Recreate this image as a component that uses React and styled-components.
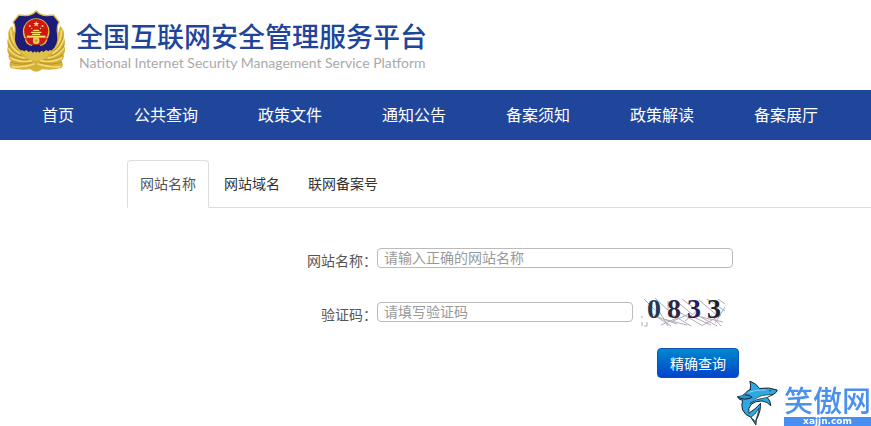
import React, { useState } from 'react';
import styled, { createGlobalStyle } from 'styled-components';

const NAV_ITEMS = ['首页', '公共查询', '政策文件', '通知公告', '备案须知', '政策解读', '备案展厅'];

const TABS = ['网站名称', '网站域名', '联网备案号'];

const CAPTCHA = [
  { digit: '0', color: '#1f3a52' },
  { digit: '8', color: '#33263f' },
  { digit: '3', color: '#251c5c' },
  { digit: '3', color: '#1c222c' },
];

function Emblem() {
  return (
    <svg width="59" height="64" viewBox="20 30 176 192" aria-hidden="true">
      {/* wheat wreath */}
      <path
        d="M38 78 Q22 92 28 112 Q20 124 26 138 Q20 152 28 164 Q24 174 34 182 Q26 194 34 204 Q62 212 92 208 Q110 222 128 208 Q158 212 186 204 Q194 194 186 182 Q196 174 192 164 Q200 152 194 138 Q200 124 192 112 Q198 92 182 78 L160 150 L110 176 L60 150 Z"
        fill="#d6b03a"
      />
      <g fill="none" stroke="#f3dd70" strokeWidth="5" strokeLinecap="round">
        <path d="M34 90 Q34 122 54 144" />
        <path d="M28 118 Q36 146 60 160" />
        <path d="M28 146 Q42 168 74 174" />
        <path d="M34 174 Q60 188 96 182" />
        <path d="M38 200 Q70 204 104 192" />
        <path d="M186 90 Q186 122 166 144" />
        <path d="M192 118 Q184 146 160 160" />
        <path d="M192 146 Q178 168 146 174" />
        <path d="M186 174 Q160 188 124 182" />
        <path d="M182 200 Q150 204 116 192" />
      </g>
      <g fill="none" stroke="#a8822a" strokeWidth="2" strokeLinecap="round">
        <path d="M29 108 Q34 134 56 152" />
        <path d="M26 134 Q38 160 66 168" />
        <path d="M30 164 Q52 182 86 180" />
        <path d="M34 186 Q66 198 98 188" />
        <path d="M191 108 Q186 134 164 152" />
        <path d="M194 134 Q182 160 154 168" />
        <path d="M190 164 Q168 182 134 180" />
        <path d="M186 186 Q154 198 122 188" />
      </g>
      {/* shield */}
      <path
        d="M110 33 Q122 46 142 47 L162 45 L179 66 Q170 80 175 104 Q180 138 154 156 Q128 166 110 176 Q92 166 66 156 Q40 138 45 104 Q50 80 41 66 L58 45 L78 47 Q98 46 110 33 Z"
        fill="#1d1c78"
        stroke="#dcb944"
        strokeWidth="4"
      />
      <path
        d="M62 154 L68 150 L74 154 L80 150 L88 156 L94 152 L100 158 L106 154 L110 158 L114 154 L120 158 L126 152 L132 156 L140 150 L146 154 L152 150 L158 154 L138 174 L110 184 L82 174 Z"
        fill="#dfc04a"
      />
      {/* national emblem */}
      <circle cx="110" cy="95" r="40" fill="#e3bd3e" />
      <circle cx="110" cy="93" r="36" fill="#d01614" />
      <path d="M110 63 L112 69 L119 69 L114 73 L116 80 L110 76 L104 80 L106 73 L101 69 L108 69 Z" fill="#ffe46b" />
      <g fill="#ffe46b">
        <circle cx="91" cy="78" r="3" />
        <circle cx="97" cy="85" r="2" />
        <circle cx="123" cy="85" r="2" />
        <circle cx="129" cy="78" r="3" />
        <path d="M100 93 L103 89 H117 L120 93 Z" />
        <path d="M96 95 H124 L127 99 H93 Z" />
        <path d="M98 101 H122 V105 H98 Z" />
        <path d="M82 107 H138 V113 H82 Z" />
      </g>
      <path d="M76 114 Q90 120 110 119 Q130 120 144 114 L138 132 L124 132 Q110 140 96 132 L82 132 Z" fill="#cd1815" />
      <circle cx="110" cy="122" r="10" fill="#edcf5a" />
      <circle cx="110" cy="122" r="4" fill="#c79e2b" />
      <path d="M78 118 Q82 134 98 136 M142 118 Q138 134 122 136" fill="none" stroke="#e3bd3e" strokeWidth="4" />
    </svg>
  );
}

function Shark() {
  return (
    <svg width="41" height="46" viewBox="288 134 124 138" aria-hidden="true">
      <g stroke="#14202a" strokeWidth="3" strokeLinejoin="round" strokeLinecap="round">
        <path
          d="M328 162 Q331 148 327 137 Q346 143 356 159 Q386 154 410 164 Q407 173 396 178 L379 186 Q390 196 390 211 Q380 199 364 197 Q344 196 332 206 Q320 218 324 234 Q344 222 359 204 Q360 226 352 242 Q344 254 345 269 Q337 258 330 246 Q312 240 305 224 Q300 210 305 195 Q293 194 290 184 Q304 184 313 174 Q318 166 328 162 Z"
          fill="#2fa8e2"
        />
        <path d="M328 204 Q344 190 366 189 L379 186 L397 177 Q376 178 362 181 Q340 188 328 204 Z" fill="#fff" strokeWidth="2" />
        <path d="M290 184 Q308 198 334 186 Q328 178 313 178" fill="#2795d2" strokeWidth="3" />
        <path d="M331 246 Q342 240 354 219 Q352 236 344 258 Z" fill="#fff" strokeWidth="2" />
      </g>
      <path d="M324 171 Q342 163 374 164" fill="none" stroke="#7fd2f4" strokeWidth="3" strokeLinecap="round" />
      <circle cx="388" cy="166" r="2" fill="#14202a" />
    </svg>
  );
}

function CaptchaNoise() {
  return (
    <Noise viewBox="0 0 86 30" aria-hidden="true">
      <g fill="none" stroke="#b3aab6" strokeWidth="1">
        <path d="M3 2 L14 13 M1 19 V21 M1 25 V29 M6 25 V29 L3 29 M14 1 L30 16 M27 4 V13" />
        <path d="M10 16 L30 29 M14 19 L36 27 M18 14 L27 29 M22 22 L46 28" />
        <path d="M34 3 L52 18 M41 2 L58 15 M30 17 L50 29 M38 15 L62 29" />
        <path d="M44 24 L58 12 M48 18 L70 28 M58 3 L78 20 M66 2 L84 14" />
        <path d="M54 17 L76 29 M60 20 L82 25 M70 18 L80 29 M84 10 L74 26 M77 2 L84 7" />
        <path d="M20 28 L38 20 M32 24 L48 17 M62 28 L80 18" />
      </g>
    </Noise>
  );
}

function App() {
  const [activeTab, setActiveTab] = useState(0);
  const [name, setName] = useState('');
  const [code, setCode] = useState('');

  return (
    <>
      <GlobalStyle />
      <Header>
        <Emblem />
        <Brand>
          <Title>全国互联网安全管理服务平台</Title>
          <Subtitle>National Internet Security Management Service Platform</Subtitle>
        </Brand>
      </Header>

      <Nav>
        {NAV_ITEMS.map((item) => (
          <NavLink key={item} href="#">
            {item}
          </NavLink>
        ))}
      </Nav>

      <Main>
        <TabList role="tablist">
          {TABS.map((tab, i) => (
            <Tab key={tab} role="tab" aria-selected={i === activeTab} $active={i === activeTab} onClick={() => setActiveTab(i)}>
              {tab}
            </Tab>
          ))}
        </TabList>

        <Form onSubmit={(e) => e.preventDefault()}>
          <Row>
            <Label htmlFor="site-name">网站名称：</Label>
            <Field>
              <Input id="site-name" placeholder="请输入正确的网站名称" value={name} onChange={(e) => setName(e.target.value)} />
            </Field>
          </Row>
          <Row>
            <Label htmlFor="site-code">验证码：</Label>
            <Field>
              <Input id="site-code" placeholder="请填写验证码" value={code} onChange={(e) => setCode(e.target.value)} />
              <Captcha>
                <CaptchaNoise />
                {CAPTCHA.map((c, i) => (
                  <Digit key={i} $color={c.color}>
                    {c.digit}
                  </Digit>
                ))}
              </Captcha>
            </Field>
          </Row>
          <SubmitBtn type="submit">精确查询</SubmitBtn>
        </Form>
      </Main>

      <Watermark>
        <Shark />
        <div>
          <WatermarkName>笑傲网</WatermarkName>
          <WatermarkUrl>xajjn.com</WatermarkUrl>
        </div>
      </Watermark>
    </>
  );
}

// ========== Styled Components ==========

const GlobalStyle = createGlobalStyle`
  * {
    box-sizing: border-box;
  }

  body {
    margin: 0;
    background: #fff;
    color: #555;
    font-family: 'Noto Sans CJK SC', sans-serif;
    font-size: 14px;
    line-height: 20px;
  }

  button,
  input {
    font: inherit;
  }
`;

const Header = styled.header`
  display: flex;
  align-items: flex-start;
  gap: 11px;
  height: 90px;
  padding: 10px 6px;
`;

const Brand = styled.div`
  padding-top: 8px;
`;

const Title = styled.h1`
  margin: 0;
  color: #21449b;
  font-size: 27px;
  font-weight: 500;
  line-height: 36px;
`;

const Subtitle = styled.p`
  margin: 0;
  padding-left: 3px;
  color: #aaa;
  font-family: Lato, sans-serif;
  font-size: 14px;
  line-height: 18px;
`;

const Nav = styled.nav`
  display: flex;
  gap: 60px;
  padding: 0 42px 2px;
  background: #20469b;
`;

const NavLink = styled.a`
  color: #fff;
  font-size: 16px;
  line-height: 48px;
  text-decoration: none;
  white-space: nowrap;
`;

const Main = styled.main`
  padding: 20px 0 0 127px;
`;

const TabList = styled.div`
  display: flex;
  gap: 2px;
  border-bottom: 1px solid #ddd;
`;

const Tab = styled.button`
  height: 48px;
  margin-bottom: -1px;
  padding: 0 12px 2px;
  border: 1px solid ${(p) => (p.$active ? '#ddd' : 'transparent')};
  border-bottom-color: ${(p) => (p.$active ? '#fff' : 'transparent')};
  border-radius: 4px 4px 0 0;
  background: ${(p) => (p.$active ? '#fff' : 'transparent')};
  color: ${(p) => (p.$active ? '#555' : '#333')};
  cursor: pointer;
`;

const Form = styled.form`
  display: flex;
  flex-direction: column;
  gap: 20px;
  max-width: 612px;
  padding-top: 35px;
`;

const Row = styled.div`
  display: flex;
  align-items: center;
  height: 30px;
  margin-right: 6px;

  & + & {
    margin-top: 4px;
  }
`;

const Label = styled.label`
  flex: 1;
  padding-top: 4px;
  text-align: right;
  white-space: nowrap;
`;

const Field = styled.div`
  display: flex;
  align-items: center;
  gap: 8px;
  width: 356px;
`;

const Input = styled.input`
  flex: 1;
  min-width: 0;
  height: 20px;
  padding: 0 6px 2px;
  border: 1px solid #bbb;
  border-radius: 4px;
  color: #555;
  outline: none;

  &::placeholder {
    color: #999;
    opacity: 1;
  }
`;

const Captcha = styled.div`
  position: relative;
  z-index: 0;
  display: flex;
  gap: 6px;
  width: 92px;
  height: 30px;
  padding-left: 6px;
`;

const Noise = styled.svg`
  position: absolute;
  z-index: -1;
  top: 0;
  left: 0;
  width: 86px;
  height: 30px;
`;

const Digit = styled.span`
  color: ${(p) => p.$color};
  font-family: 'Liberation Serif', serif;
  font-size: 28px;
  font-weight: 700;
  line-height: 24px;
`;

const SubmitBtn = styled.button`
  align-self: flex-end;
  height: 30px;
  margin-top: 1px;
  padding: 0 12px;
  border: 1px solid #0a52b8;
  border-radius: 4px;
  background: linear-gradient(#0088cc, #0044cc);
  color: #fff;
  cursor: pointer;
`;

const Watermark = styled.div`
  position: fixed;
  right: 0;
  bottom: 0;
  display: flex;
  align-items: flex-end;
  gap: 6px;
`;

const WatermarkName = styled.div`
  color: #4a90ee;
  font-size: 29px;
  font-weight: 500;
  line-height: 35px;
`;

const WatermarkUrl = styled.div`
  background: #4a8ff0;
  color: #fff;
  font-family: 'DejaVu Sans', sans-serif;
  font-size: 9px;
  font-weight: 700;
  line-height: 9px;
  text-align: center;
`;

export default App;
